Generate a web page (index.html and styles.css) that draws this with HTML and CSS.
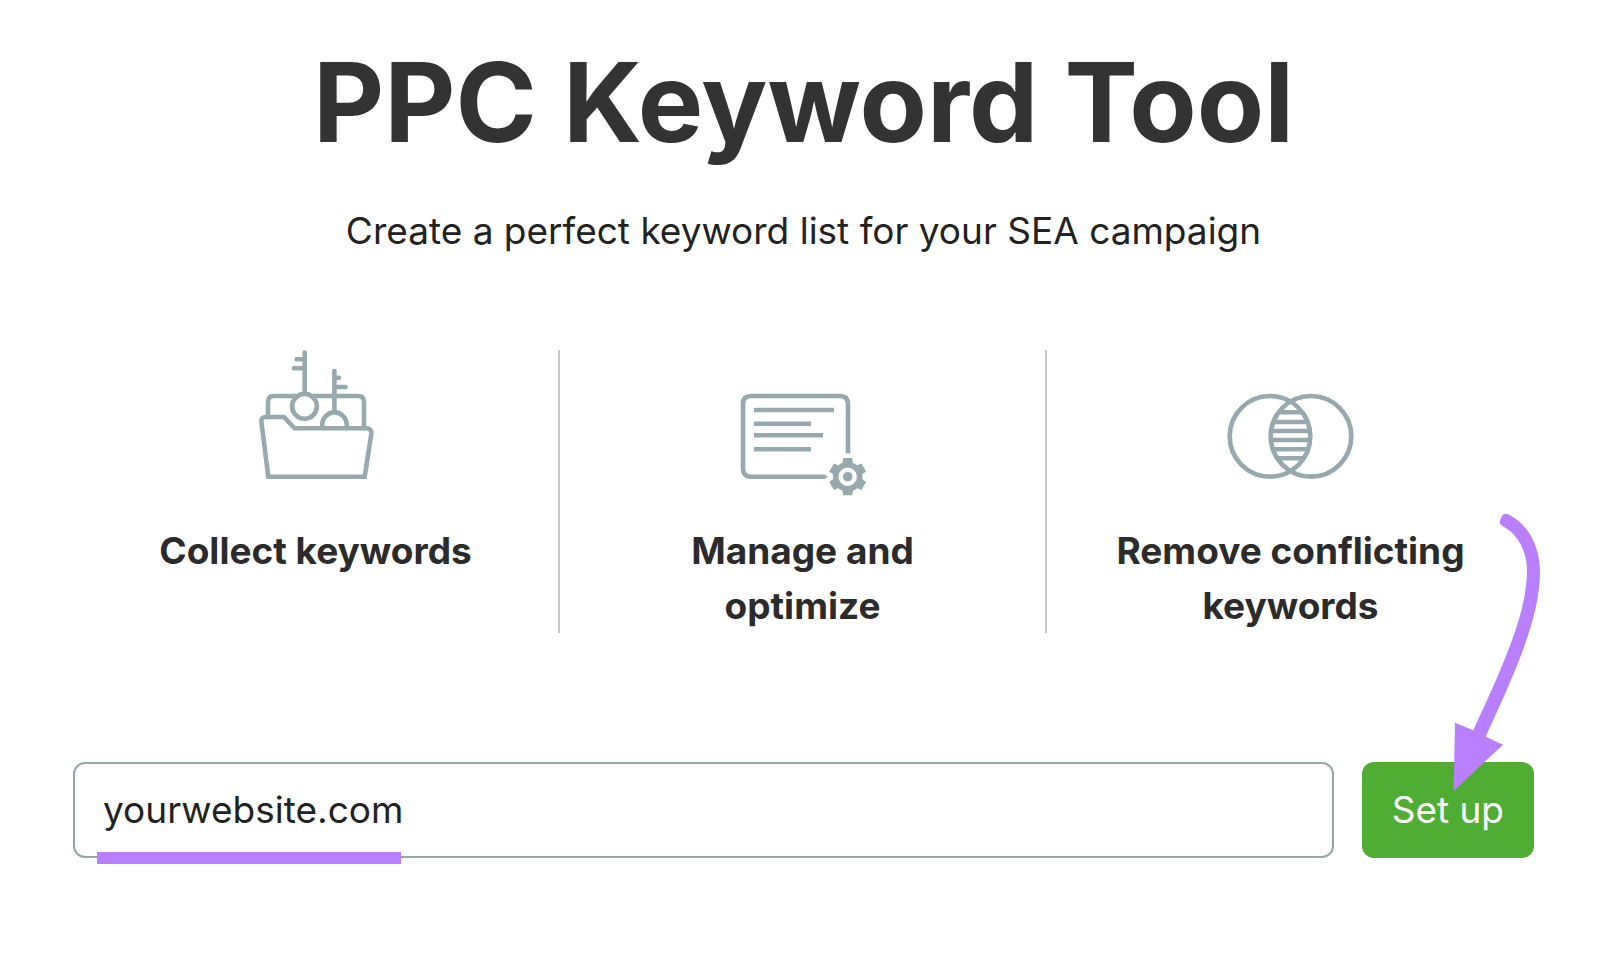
FILE: index.html
```html
<!doctype html>
<html lang="en">
    <head>
        <meta charset="utf-8">
        <meta name="viewport" content="width=device-width, initial-scale=1">
        <title>PPC Keyword Tool</title>
        <link rel="stylesheet" href="styles.css">
    </head>
    <body>
        <main class="page">
            <h1 class="title">PPC Keyword Tool</h1>
            <p class="subtitle">Create a perfect keyword list for your SEA campaign</p>
            <ul class="features">
                <li class="feature">
                    <svg class="icon" viewBox="0 0 144 150" aria-hidden="true">
                        <path d="M24 67V52q0-6 6-6h22M69 46h45q6 0 6 6v26"/>
                        <path d="M24.3 126.700 17.400 72q-.4-5 4.600-5h18l10.500 11.300H122q6 0 5.300 5.700l-6.600 42.700z"/>
                        <circle cx="60.500" cy="56.300" r="12.400"/>
                        <path d="M78.200 78v-3.300a12.300 12.300 0 0 1 24.600 0V78"/>
                        <path class="round" d="M60.700 2.500v41M52.500 9.300h8M50 18.300h10M90.400 21v40M91 27.700h4M91 37h10.500"/>
                    </svg>
                    <span>Collect keywords</span>
                </li>
                <li class="feature">
                    <svg class="icon" viewBox="0 0 144 150" aria-hidden="true">
                        <path d="M117 103.500V54q0-8-8-8H20q-8 0-8 8v64.700q0 8 8 8h73"/>
                        <path class="solid" d="M92 124.400h1.500l3.500 2.300-3.500 2.300H92z"/>
                        <path d="M23 60h80M23 73.700h57M23 85.300h69M23 99.300h57"/>
                        <circle class="gear" cx="116.700" cy="126.700" r="12"/>
                        <circle class="solid" cx="116.700" cy="126.700" r="4.800"/>
                        <g class="solid" transform="translate(116.700 126.700)">
                            <path id="tooth" d="M-4.600-18.600h9.200L5.400-12H-5.400z"/>
                            <use href="#tooth" transform="rotate(60)"/>
                            <use href="#tooth" transform="rotate(120)"/>
                            <use href="#tooth" transform="rotate(180)"/>
                            <use href="#tooth" transform="rotate(240)"/>
                            <use href="#tooth" transform="rotate(300)"/>
                        </g>
                    </svg>
                    <span>Manage and optimize</span>
                </li>
                <li class="feature">
                    <svg class="icon" viewBox="0 0 144 150" aria-hidden="true">
                        <circle cx="51" cy="86.300" r="40.300"/>
                        <circle cx="92" cy="86.300" r="40.300"/>
                        <path d="M60 62.300h23M55 72h33M53 81h37M53 90h37M54 99.300h35M59 108.300h25"/>
                    </svg>
                    <span>Remove conflicting keywords</span>
                </li>
            </ul>
            <form class="setup">
                <div class="field">
                    <input class="domain" type="text" name="domain" value="yourwebsite.com" aria-label="Website">
                    <span class="underline"></span>
                </div>
                <div class="action">
                    <button class="submit" type="button">Set up</button>
                    <svg class="arrow" viewBox="340 35 270 840" aria-hidden="true">
                        <path d="M488 45Q495 37 508 43C566 72 601 140 601 213C601 350 532 505 438 709L490 733 342 872 346 667 401 690C490 496 562 340 562 210C562 155 535 100 488 77Q476 71 482 58Z"/>
                    </svg>
                </div>
            </form>
        </main>
    </body>
</html>
```

FILE: styles.css
```css
* {
    box-sizing: border-box;
}
body {
    margin: 0;
    background: #fff;
    color: #222;
    font-family: "Inter", sans-serif;
    font-size: 37px;
}
.page {
    padding: 34px 66px 72px 73px;
}
.title {
    margin: 0;
    color: #333;
    font-size: 110px;
    font-weight: 700;
    line-height: 136px;
    text-align: center;
}
.subtitle {
    margin: 33px 0 0;
    line-height: 56px;
    text-align: center;
}

.features {
    display: grid;
    grid-template-columns: repeat(3, 1fr);
    margin: 91px 0 0;
    padding: 0;
    list-style: none;
}
.feature {
    display: flex;
    flex-direction: column;
    align-items: center;
    padding: 0 60px;
    color: #2b2b2b;
    font-weight: 700;
    line-height: 55px;
    text-align: center;
}
.feature:not(:last-child) {
    border-right: 2px solid #c4c7c7;
}
.icon {
    width: 144px;
    height: 150px;
    margin-bottom: 23px;
    fill: none;
    stroke: #98a9ad;
    stroke-width: 4.6;
}
.icon .round {
    stroke-linecap: round;
}
.icon .solid {
    fill: #98a9ad;
    stroke: none;
}
.icon .gear {
    stroke-width: 5.6;
}

.setup {
    display: flex;
    gap: 28px;
    margin-top: 129px;
}
.field {
    position: relative;
    flex: 1;
}
.domain {
    width: 100%;
    height: 96px;
    padding: 0 28px 2px;
    border: 2px solid #99a5a8;
    border-radius: 12px;
    background: #fff;
    color: #222;
    font: inherit;
}
.underline {
    position: absolute;
    left: 24px;
    bottom: -6px;
    width: 304px;
    height: 12px;
    background: #b880ff;
}
.action {
    position: relative;
}
.submit {
    height: 96px;
    padding: 0 30px 2px;
    border: 0;
    border-radius: 12px;
    background: #50ad33;
    color: #fff;
    font: inherit;
}

/* hand-drawn pointer over the button */
.arrow {
    position: absolute;
    right: -9px;
    bottom: 66px;
    width: 90px;
    height: 280px;
    fill: #b880ff;
    pointer-events: none;
}
```
